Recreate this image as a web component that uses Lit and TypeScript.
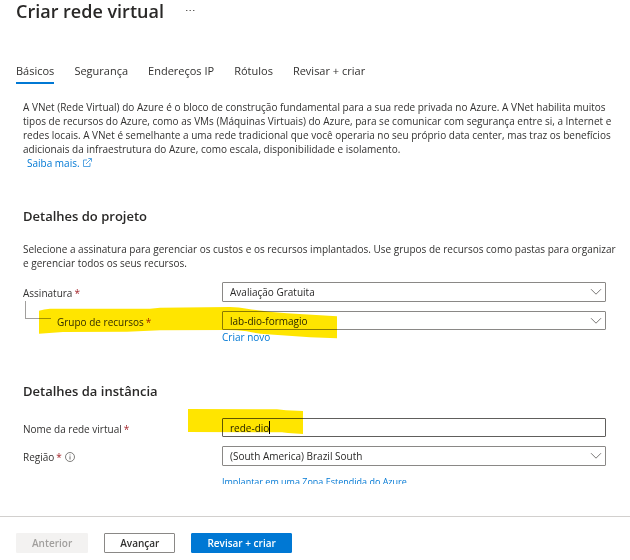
import { LitElement, html, svg, css } from "lit";
import { customElement, state } from "lit/decorators.js";

const chevron = html`<svg class="chevron" viewBox="0 0 12 8" aria-hidden="true">
  <path d="M1 1.2 L6 6.2 L11 1.2" fill="none" stroke="#7a7876" stroke-width="1" />
</svg>`;

const marker = (d: string) => svg`<path d=${d} fill="#ffe500" />`;

@customElement("app-root")
export class AppRoot extends LitElement {
  @state() private active = 0;

  private tabs = ["Básicos", "Segurança", "Endereços IP", "Rótulos", "Revisar + criar"];

  static styles = css`
    :host {
      display: flex;
      flex-direction: column;
      height: 100vh;
      background: #fff;
      color: #323130;
      font-family: "Segoe UI", "Open Sans", "Noto Sans", sans-serif;
      font-size: 10px;
      line-height: 14px;
    }
    * {
      box-sizing: border-box;
    }
    header {
      display: flex;
      align-items: center;
      gap: 20px;
      padding: 0 16px;
      height: 22px;
      flex: none;
    }
    h1 {
      margin: 0;
      font-size: 18px;
      line-height: 22px;
      font-weight: 600;
      color: #292827;
    }
    .more {
      border: 0;
      padding: 0;
      background: none;
      display: flex;
    }
    .more svg {
      width: 12px;
      height: 4px;
    }
    nav {
      display: flex;
      flex: none;
      gap: 20px;
      margin-top: 37px;
      padding: 0 16px;
    }
    .tab {
      border: 0;
      background: none;
      padding: 0;
      height: 25px;
      font: inherit;
      font-size: 11px;
      line-height: 20px;
      color: #323130;
      border-bottom: 2px solid transparent;
    }
    .tab.active {
      border-color: #0078d4;
    }
    main {
      flex: 1;
      min-height: 0;
      overflow: hidden;
      margin: 16px 0 32px;
      padding: 0 24px 0 23px;
    }
    p {
      margin: 0 -14px 0 0;
    }
    a {
      color: #0078d4;
      text-decoration: none;
    }
    .learn {
      margin-left: 4px;
    }
    .external {
      width: 9px;
      height: 9px;
      margin-left: 1px;
    }
    h2 {
      margin: 0;
      font-size: 13px;
      line-height: 18px;
      font-weight: 600;
      color: #292827;
    }
    .project {
      margin-top: 37px;
    }
    .project p {
      margin-top: 17px;
    }
    .instance {
      margin-top: 38px;
    }
    .row {
      position: relative;
      display: flex;
      align-items: center;
      margin-top: 9px;
    }
    .row.first {
      margin-top: 12px;
    }
    .instance .row.first {
      margin-top: 18px;
    }
    .name {
      flex: none;
      width: 199px;
      padding-top: 2px;
      display: flex;
      align-items: center;
      gap: 2px;
    }
    .name.child {
      padding-left: 34px;
    }
    .req {
      color: #a4262c;
    }
    .info {
      width: 10px;
      height: 10px;
      margin-left: 1px;
    }
    .branch {
      position: absolute;
      left: 2px;
      top: -10px;
      width: 26px;
      height: 18px;
      border: solid #a19f9d;
      border-width: 0 0 1px 1px;
    }
    .field {
      position: relative;
      flex: 1;
      min-width: 0;
      display: flex;
    }
    select,
    input {
      appearance: none;
      width: 100%;
      height: 20px;
      margin: 0;
      padding: 0 24px 0 7px;
      border: 1px solid #8a8886;
      border-radius: 1px;
      background: #fff;
      color: #292827;
      font: inherit;
      outline: none;
    }
    input {
      height: 19px;
      border-color: #605e5c;
    }
    #group {
      height: 19px;
    }
    .chevron {
      position: absolute;
      right: 4px;
      top: 6px;
      width: 12px;
      height: 8px;
      pointer-events: none;
    }
    .caret {
      position: absolute;
      left: 47px;
      top: 3px;
      width: 1px;
      height: 13px;
      background: #000;
    }
    .marker {
      position: absolute;
      mix-blend-mode: multiply;
      pointer-events: none;
    }
    .marker.group {
      left: 16px;
      top: -4px;
      width: 298px;
      height: 32px;
    }
    .marker.net {
      left: 165px;
      top: -9px;
      width: 115px;
      height: 25px;
    }
    .under {
      display: block;
      width: max-content;
      margin-left: 199px;
    }
    .zone {
      margin-top: 9px;
      font-size: 9px;
    }
    footer {
      flex: none;
      display: flex;
      gap: 16px;
      padding: 16px 16px 7px;
      border-top: 1px solid #d2d0ce;
    }
    .btn {
      height: 20px;
      padding: 0 15px;
      border: 1px solid #8a8886;
      border-radius: 1px;
      background: #fff;
      color: #323130;
      font: inherit;
      font-weight: 600;
      line-height: 18px;
    }
    .btn:disabled {
      border-color: #f3f2f1;
      background: #f3f2f1;
      color: #a19f9d;
    }
    .btn.primary {
      border-color: #0078d4;
      background: #0078d4;
      color: #fff;
    }
  `;

  render() {
    return html`
      <header>
        <h1>Criar rede virtual</h1>
        <button class="more" aria-label="Mais opções">
          <svg viewBox="0 0 12 4">
            <path d="M2 1.5h1.4M5.5 1.5h1.4M9 1.5h1.4" stroke="#605e5c" stroke-width="1" />
          </svg>
        </button>
      </header>
      <nav>
        ${this.tabs.map(
          (t, i) => html`<button
            class="tab ${i === this.active ? "active" : ""}"
            @click=${() => (this.active = i)}
          >${t}</button>`
        )}
      </nav>
      <main>
        <p>
          A VNet (Rede Virtual) do Azure é o bloco de construção fundamental para a sua rede privada
          no Azure. A VNet habilita muitos tipos de recursos do Azure, como as VMs (Máquinas
          Virtuais) do Azure, para se comunicar com segurança entre si, a Internet e redes locais. A
          VNet é semelhante a uma rede tradicional que você operaria no seu próprio data center, mas
          traz os benefícios adicionais da infraestrutura do Azure, como escala, disponibilidade e
          isolamento.<br />
          <a class="learn" href="#">Saiba mais.
            <svg class="external" viewBox="0 0 9 9" aria-hidden="true">
              <path
                d="M4 2H.5V8.5H7V5M3 6L8.3 .7M5.3 .5H8.5V3.7"
                fill="none" stroke="#2f8fdc" stroke-width=".8"
              /></svg></a>
        </p>

        <section class="project">
          <h2>Detalhes do projeto</h2>
          <p>
            Selecione a assinatura para gerenciar os custos e os recursos implantados. Use grupos de
            recursos como pastas para organizar e gerenciar todos os seus recursos.
          </p>
          <div class="row first">
            <label class="name" for="sub">Assinatura <span class="req">*</span></label>
            <div class="field">
              <select id="sub"><option>Avaliação Gratuita</option></select>${chevron}
            </div>
          </div>
          <div class="row">
            <span class="branch"></span>
            <label class="name child" for="group">Grupo de recursos <span class="req">*</span></label>
            <div class="field">
              <select id="group"><option>lab-dio-formagio</option></select>${chevron}
            </div>
            <svg class="marker group" viewBox="0 0 298 32" aria-hidden="true">
              ${marker("M0 3.7Q5 2 11 1.7H111L121 .7L191 0Q200 0 208 1.7Q228 5 248 6.3L298 9.3V31.3L271 30.3L228 27.3Q218 26.5 208 24.3Q198 23 188 23L121 23.3L88 24.7L24 25L0 26.7Z")}
            </svg>
          </div>
          <a class="under" href="#">Criar novo</a>
        </section>

        <section class="instance">
          <h2>Detalhes da instância</h2>
          <div class="row first">
            <label class="name" for="net">Nome da rede virtual <span class="req">*</span></label>
            <div class="field">
              <input id="net" type="text" value="rede-dio" /><span class="caret"></span>
            </div>
            <svg class="marker net" viewBox="0 0 115 25" aria-hidden="true">
              ${marker("M0 0L89 .3L98 1.3L115 2V25L100 24L94 23.3L0 23Z")}
            </svg>
          </div>
          <div class="row">
            <label class="name" for="region">Região <span class="req">*</span>
              <svg class="info" viewBox="0 0 10 10" aria-hidden="true">
                <circle cx="5" cy="5" r="4.5" fill="none" stroke="#605e5c" stroke-width=".8" />
                <path d="M5 4.3V7.5M5 2.5V3.4" stroke="#605e5c" stroke-width=".9" />
              </svg>
            </label>
            <div class="field">
              <select id="region"><option>(South America) Brazil South</option></select>${chevron}
            </div>
          </div>
          <a class="under zone" href="#">Implantar em uma Zona Estendida do Azure</a>
        </section>
      </main>
      <footer>
        <button class="btn" disabled>Anterior</button>
        <button class="btn">Avançar</button>
        <button class="btn primary">Revisar + criar</button>
      </footer>
    `;
  }
}
